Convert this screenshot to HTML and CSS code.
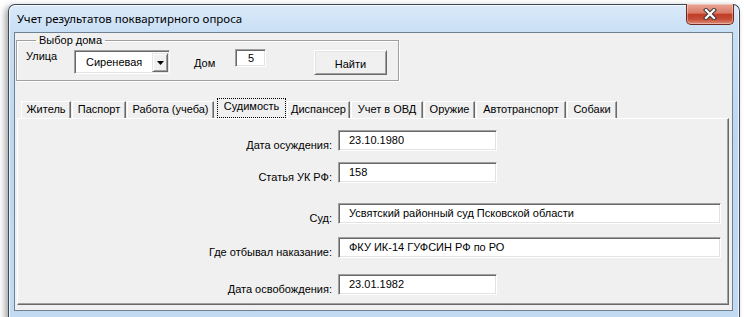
FILE: index.html
```html
<!DOCTYPE html>
<html lang="ru">
<head>
  <meta charset="UTF-8">
  <title>Учет результатов поквартирного опроса</title>
  <link rel="stylesheet" href="styles.css">
</head>
<body>
  <div class="window">
    <div class="titlebar">
      <span class="title">Учет результатов поквартирного опроса</span>
      <button class="close-btn" aria-label="Закрыть">
        <svg width="14" height="12" viewBox="0 0 14 12">
          <path d="M3 2 L11 10 M11 2 L3 10" stroke="#3b3b3b" stroke-width="4.2" stroke-linecap="square"/>
          <path d="M3 2 L11 10 M11 2 L3 10" stroke="#fff" stroke-width="2.2" stroke-linecap="square"/>
        </svg>
      </button>
    </div>

    <div class="client">
      <fieldset class="house-box">
        <legend>Выбор дома</legend>
        <div class="house-row">
          <span class="lbl lbl-street">Улица</span>
          <div class="combo">
            <span class="combo-text">Сиреневая</span>
            <span class="combo-btn">
              <svg width="7" height="4" viewBox="0 0 7 4"><path d="M0 0 H7 L3.5 4 Z" fill="#000"/></svg>
            </span>
          </div>
          <span class="lbl lbl-house">Дом</span>
          <div class="field field-house">5</div>
          <button class="btn-find">Найти</button>
        </div>
      </fieldset>

      <div class="tabs">
        <div class="tab tab-w50">Житель</div>
        <div class="tab tab-w54">Паспорт</div>
        <div class="tab tab-w87">Работа (учеба)</div>
        <div class="tab tab-active">Судимость</div>
        <div class="tab tab-w63">Диспансер</div>
        <div class="tab tab-w72">Учет в ОВД</div>
        <div class="tab tab-w51">Оружие</div>
        <div class="tab tab-w90">Автотранспорт</div>
        <div class="tab tab-w50">Собаки</div>
      </div>

      <div class="panel">
        <div class="row">
          <span class="row-label">Дата осуждения:</span>
          <div class="field field-short">23.10.1980</div>
        </div>
        <div class="row row-gap-11">
          <span class="row-label">Статья УК РФ:</span>
          <div class="field field-short">158</div>
        </div>
        <div class="row row-gap-20">
          <span class="row-label">Суд:</span>
          <div class="field field-long">Усвятский районный суд Псковской области</div>
        </div>
        <div class="row row-gap-13">
          <span class="row-label">Где отбывал наказание:</span>
          <div class="field field-long">ФКУ ИК-14 ГУФСИН РФ по РО</div>
        </div>
        <div class="row row-gap-16">
          <span class="row-label">Дата освобождения:</span>
          <div class="field field-short">23.01.1982</div>
        </div>
      </div>
    </div>
  </div>
</body>
</html>
```

FILE: styles.css
```css
body {
  margin: 0;
  height: 317px;
  overflow: hidden;
  background: #fff;
  font-family: 'Liberation Sans', Arial, sans-serif;
  font-size: 11px;
  color: #000;
}
.window {
  box-sizing: border-box;
  width: 732px;
  height: 330px;
  margin: 4px 0 0 8px;
  padding: 0 6px 0 5px;
  border: 1px solid #3a4a5c;
  border-bottom: none;
  border-radius: 7px 7px 0 0;
  background: linear-gradient(180deg, #dbeaf9 0%, #c9dff5 8%, #bed7f0 40%, #c2daf2 100%);
  box-shadow: -3px 2px 6px rgba(0, 0, 0, 0.35), inset 1px 1px 0 rgba(255, 255, 255, 0.7), inset -1px 0 0 rgba(255, 255, 255, 0.7);
  display: flex;
  flex-direction: column;
}
.titlebar {
  height: 27px;
  display: flex;
  align-items: flex-start;
}
.title {
  font-family: 'Noto Sans', 'Open Sans', sans-serif;
  font-size: 11.5px;
  line-height: 27px;
  padding-left: 3px;
  color: #000;
}
.close-btn {
  box-sizing: border-box;
  margin: -1px -1px 0 auto;
  width: 48px;
  height: 21px;
  padding: 0;
  border: 1px solid #6e2a20;
  border-top: none;
  border-radius: 0 0 5px 5px;
  background: linear-gradient(180deg, #eaa898 0%, #d97a65 45%, #c23d27 52%, #c44b35 75%, #e08c76 100%);
  box-shadow: inset 0 0 0 1px rgba(255, 255, 255, 0.35);
  display: flex;
  align-items: center;
  justify-content: center;
}
.close-btn svg {
  margin-top: -1px;
}
.client {
  box-sizing: border-box;
  height: 279px;
  border: 1px solid #6f8090;
  background: #f0f0f0;
  padding: 0 0 0 1px;
}

/* выбор дома */
.house-box {
  box-sizing: border-box;
  width: 383px;
  min-width: 0;
  margin: 1px 0 0 0;
  padding: 3px 0 5px 9px;
  border: 1px solid #a0a0a0;
  box-shadow: 1px 1px 0 #fff, inset 1px 1px 0 #fff;
}
.house-box legend {
  margin-left: 10px;
  padding: 0 3px;
  line-height: 13px;
}
.house-row {
  display: flex;
  align-items: flex-start;
  height: 25px;
}
.lbl {
  line-height: 13px;
}
.lbl-street {
  width: 48px;
}
.lbl-house {
  width: 41px;
  margin: 7px 0 0 24px;
}
.combo {
  box-sizing: border-box;
  width: 96px;
  height: 24px;
  background: #fff;
  border: 1px solid;
  border-color: #a0a0a0 #fff #fff #a0a0a0;
  box-shadow: inset 1px 1px 0 #696969, inset -1px -1px 0 #e3e3e3;
  display: flex;
  align-items: center;
  padding: 1px 1px 0 11px;
}
.combo-text {
  flex: 1;
  line-height: 13px;
}
.combo-btn {
  box-sizing: border-box;
  width: 16px;
  height: 19px;
  background: #f0f0f0;
  border: 1px solid;
  border-color: #e3e3e3 #696969 #696969 #e3e3e3;
  box-shadow: inset 1px 1px 0 #fff, inset -1px -1px 0 #a0a0a0;
  display: flex;
  align-items: center;
  justify-content: center;
}
.field {
  box-sizing: border-box;
  height: 21px;
  background: #fff;
  border: 1px solid;
  border-color: #a0a0a0 #fff #fff #a0a0a0;
  box-shadow: inset 1px 1px 0 #696969, inset -1px -1px 0 #e3e3e3;
  padding: 0 0 0 10px;
  line-height: 19px;
  white-space: nowrap;
}
.field-house {
  width: 31px;
  height: 18px;
  line-height: 16px;
  margin-top: -1px;
  padding-left: 12px;
}
.btn-find {
  box-sizing: border-box;
  width: 73px;
  height: 25px;
  margin-left: 48px;
  padding: 3px 0 0;
  font: inherit;
  background: #f0f0f0;
  border: 1px solid;
  border-color: #fff #696969 #696969 #fff;
  box-shadow: inset 1px 1px 0 #e3e3e3, inset -1px -1px 0 #a0a0a0;
}

/* вкладки */
.tabs {
  display: flex;
  align-items: flex-end;
  height: 20px;
  margin: 17px 0 0 5px;
}
.tab {
  box-sizing: border-box;
  height: 17px;
  margin-right: 1px;
  border-top: 1px solid #fff;
  border-left: 1px solid #fff;
  border-right: 1px solid #696969;
  box-shadow: inset -1px 0 0 #a0a0a0;
  text-align: center;
  line-height: 15px;
  white-space: nowrap;
}
.tab-w50 { width: 50px; }
.tab-w51 { width: 51px; }
.tab-w54 { width: 54px; }
.tab-w63 { width: 63px; }
.tab-w72 { width: 72px; }
.tab-w87 { width: 87px; }
.tab-w90 { width: 90px; }
.tab-active {
  width: 69px;
  height: 20px;
  margin-left: 2px;
  border: 1px dotted #000;
  box-shadow: none;
  padding-bottom: 3px;
}

/* страница вкладки */
.panel {
  box-sizing: border-box;
  width: 712px;
  height: 187px;
  margin-left: 1px;
  padding-top: 11px;
  border: 1px solid;
  border-color: #fff #696969 #696969 #fff;
  box-shadow: inset -1px -1px 0 #a0a0a0;
}
.row {
  display: flex;
  align-items: flex-end;
}
.row-gap-11 { margin-top: 11px; }
.row-gap-13 { margin-top: 13px; }
.row-gap-16 { margin-top: 16px; }
.row-gap-20 { margin-top: 20px; }
.row-label {
  width: 314px;
  margin-right: 6px;
  margin-bottom: -1px;
  text-align: right;
  line-height: 13px;
}
.field-short { width: 159px; }
.field-long { width: 383px; }
```
